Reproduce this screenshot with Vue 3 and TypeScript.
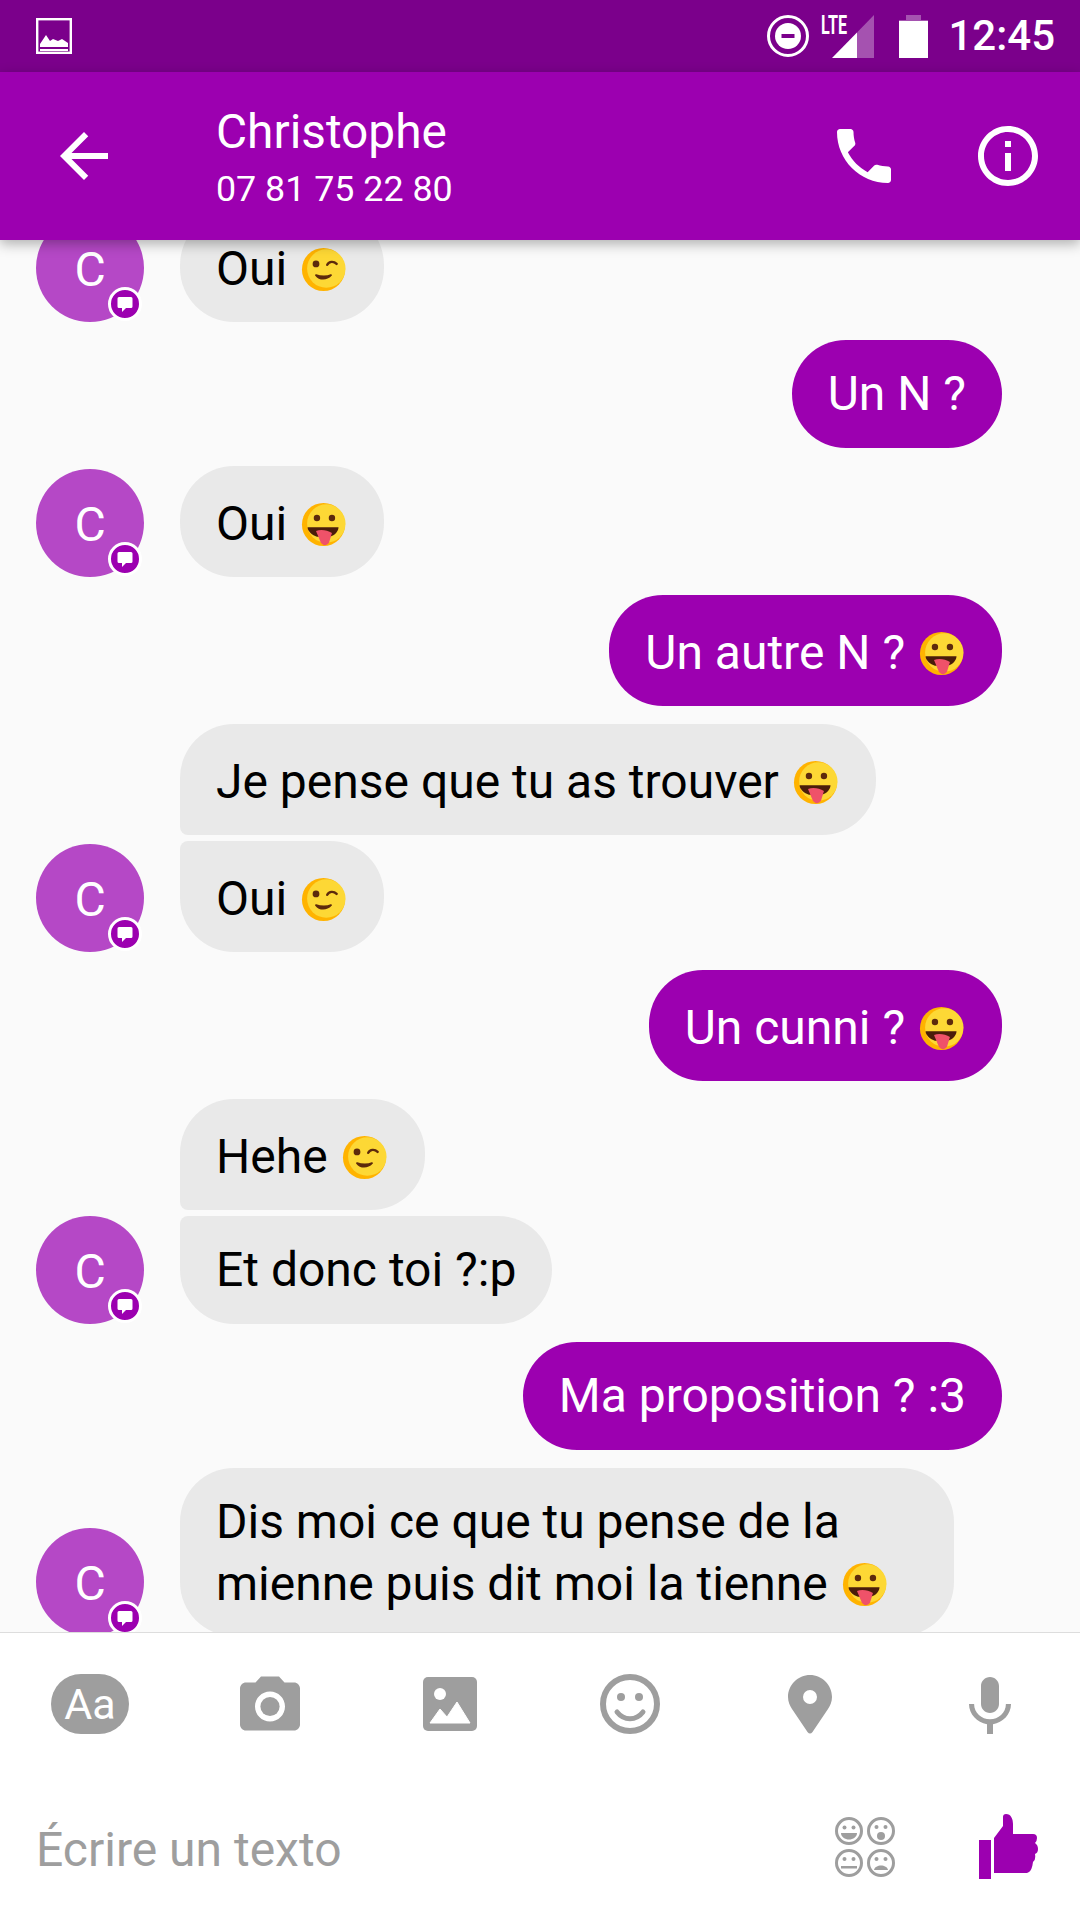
<script setup lang="ts">
type Line = { text: string; emoji?: 'wink' | 'tongue'; cls?: string }
type Group = { from: 'them' | 'me'; lines: Line[] }

const groups: Group[] = [
  { from: 'them', lines: [{ text: 'Oui', emoji: 'wink' }] },
  { from: 'me', lines: [{ text: 'Un N ?' }] },
  { from: 'them', lines: [{ text: 'Oui', emoji: 'tongue' }] },
  { from: 'me', lines: [{ text: 'Un autre N ?', emoji: 'tongue' }] },
  { from: 'them', lines: [{ text: 'Je pense que tu as trouver', emoji: 'tongue' }, { text: 'Oui', emoji: 'wink' }] },
  { from: 'me', lines: [{ text: 'Un cunni ?', emoji: 'tongue' }] },
  { from: 'them', lines: [{ text: 'Hehe', emoji: 'wink' }, { text: 'Et donc toi ?:p' }] },
  { from: 'me', lines: [{ text: 'Ma proposition ? :3' }] },
  { from: 'them', lines: [{ text: 'Dis moi ce que tu pense de la mienne puis dit moi la tienne', emoji: 'tongue', cls: 'multi' }] },
]

const bubbleClass = (g: Group, i: number) => ({
  tall: !!g.lines[i].emoji,
  'join-below': i < g.lines.length - 1,
  'join-above': i > 0,
})
</script>

<template>
  <div class="phone">
    <svg class="defs" width="0" height="0">
      <symbol id="tongue" viewBox="0 0 48 48">
        <circle cx="24" cy="24" r="23" fill="#ffb300" />
        <circle cx="27" cy="23" r="20.5" fill="#fdd835" />
        <circle cx="17" cy="17" r="3.4" fill="#5d2a0c" />
        <circle cx="33" cy="17" r="3.4" fill="#5d2a0c" />
        <path d="M7 27h33c0 4-4 9-9 10H17C12 36 7 31 7 27z" fill="#4a1d0a" />
        <path d="M16 31c5-2 12-1 17 2l-3 10c-2 4-7 4-9 0z" fill="#ef5269" />
      </symbol>
      <symbol id="wink" viewBox="0 0 48 48">
        <circle cx="24" cy="24" r="23" fill="#ffb300" />
        <circle cx="27" cy="23" r="20.5" fill="#fdd835" />
        <circle cx="16" cy="18" r="3.6" fill="#5d2a0c" />
        <path d="M28 19c2-4 7-4 10-1" fill="none" stroke="#5d2a0c" stroke-width="2.6" stroke-linecap="round" />
        <path d="M16 30c4 5 11 5 16 0-4 2-11 2-16 0z" fill="#5d2a0c" stroke="#5d2a0c" stroke-width="2" stroke-linejoin="round" />
      </symbol>
    </svg>

    <div class="statusbar">
      <svg class="st-image" width="36" height="36" viewBox="0 0 36 36">
        <rect x="1.2" y="1.2" width="33.6" height="33.6" fill="none" stroke="#fff" stroke-width="2.4" />
        <path d="M4 26l6-9 4 6 3-2 5 2 4-2 6 4v4H4z" fill="#fff" />
        <rect x="4" y="31" width="28" height="2" fill="#fff" />
      </svg>
      <div class="st-right">
        <svg width="42" height="42" viewBox="0 0 42 42">
          <circle cx="21" cy="21" r="19.5" fill="none" stroke="#fff" stroke-width="3" />
          <circle cx="21" cy="21" r="13" fill="#fff" />
          <rect x="14.5" y="19" width="13" height="4" fill="#7b008b" />
        </svg>
        <svg class="st-signal" width="53" height="43" viewBox="0 0 53 43">
          <text x="0" y="19" class="lte" textLength="26" lengthAdjust="spacingAndGlyphs">LTE</text>
          <path d="M11 43l25-25.600V43z" fill="#fff" />
          <path d="M36 17.400L53 0v43H36z" fill="#fff" fill-opacity=".32" />
        </svg>
        <svg class="st-batt" width="29" height="43" viewBox="0 0 29 43">
          <path d="M7 0h15v5h7v5H0V5h7z" fill="#fff" fill-opacity=".32" />
          <rect y="6" width="29" height="37" fill="#fff" />
        </svg>
        <span class="time">12:45</span>
      </div>
    </div>

    <header class="appbar">
      <svg class="back" width="72" height="72" viewBox="0 0 24 24" fill="#fff">
        <path d="M20 11H7.830l5.590-5.590L12 4l-8 8 8 8 1.410-1.410L7.830 13H20v-2z" />
      </svg>
      <div class="who">
        <div class="name">Christophe</div>
        <div class="num">07 81 75 22 80</div>
      </div>
      <svg class="call" width="72" height="72" viewBox="0 0 24 24" fill="#fff">
        <path d="M6.620 10.790c1.440 2.830 3.760 5.140 6.590 6.590l2.200-2.200c.27-.27.67-.36 1.020-.24 1.120.37 2.330.57 3.570.57.55 0 1 .45 1 1V20c0 .55-.45 1-1 1-9.390 0-17-7.610-17-17 0-.55.45-1 1-1h3.500c.55 0 1 .45 1 1 0 1.250.2 2.450.57 3.570.11.35.03.74-.25 1.020l-2.200 2.200z" />
      </svg>
      <svg width="72" height="72" viewBox="0 0 24 24" fill="#fff">
        <path d="M11 17h2v-6h-2v6zm1-15C6.480 2 2 6.480 2 12s4.480 10 10 10 10-4.480 10-10S17.520 2 12 2zm0 18c-4.410 0-8-3.590-8-8s3.590-8 8-8 8 3.590 8 8-3.590 8-8 8zM11 9h2V7h-2v2z" />
      </svg>
    </header>

    <main class="thread">
      <div class="scroll">
        <div v-for="(g, gi) in groups" :key="gi" class="group" :class="g.from">
          <div v-if="g.from === 'them'" class="avatar">
            C
            <span class="badge">
              <svg width="16" height="16" viewBox="0 0 16 16">
                <path d="M2 1h12a1.500 1.500 0 0 1 1.500 1.500v8A1.500 1.500 0 0 1 14 12H9l-4 4v-4H2a1.500 1.500 0 0 1-1.500-1.500v-8A1.500 1.500 0 0 1 2 1z" fill="#fff" />
              </svg>
            </span>
          </div>
          <div class="stack">
            <div v-for="(l, i) in g.lines" :key="i" class="bubble" :class="[bubbleClass(g, i), l.cls]">
              {{ l.text }}
              <svg v-if="l.emoji" class="emoji" viewBox="0 0 48 48"><use :href="'#' + l.emoji" /></svg>
            </div>
          </div>
        </div>
      </div>
    </main>

    <footer class="composer">
      <div class="tools">
        <div class="tool"><span class="aa">Aa</span></div>
        <div class="tool">
          <svg width="60" height="55" viewBox="2 2 20 18" fill="#9e9e9e">
            <path d="M9 2L7.170 4H4c-1.100 0-2 .9-2 2v12c0 1.100.9 2 2 2h16c1.100 0 2-.9 2-2V6c0-1.100-.9-2-2-2h-3.170L15 2H9zm3 15c-2.760 0-5-2.240-5-5s2.240-5 5-5 5 2.240 5 5-2.240 5-5 5z" />
            <circle cx="12" cy="12" r="3.200" />
          </svg>
        </div>
        <div class="tool">
          <svg width="54" height="54" viewBox="0 0 54 54">
            <rect width="54" height="54" rx="5" fill="#9e9e9e" />
            <circle cx="17" cy="17" r="6" fill="#fff" />
            <path d="M7 46l10-14 7 8 10-15 13 21z" fill="#fff" stroke="#fff" stroke-width="1" stroke-linejoin="round" />
          </svg>
        </div>
        <div class="tool">
          <svg width="60" height="60" viewBox="0 0 60 60" fill="#9e9e9e">
            <circle cx="30" cy="30" r="27" fill="none" stroke="#9e9e9e" stroke-width="6" />
            <circle cx="21" cy="23" r="4" />
            <circle cx="39" cy="23" r="4" />
            <path d="M17 38c7 9 19 9 26 0" fill="none" stroke="#9e9e9e" stroke-width="5" stroke-linecap="round" />
          </svg>
        </div>
        <div class="tool">
          <svg width="44" height="60" viewBox="0 0 44 60">
            <path fill-rule="evenodd" fill="#9e9e9e" d="M22 1C10 1 0 11 0 23c0 5 2 9 4 12l15.500 23q2.500 3 5 0L40 35c2-3 4-7 4-12C44 11 34 1 22 1zm0 15a7 7 0 1 1 0 14 7 7 0 0 1 0-14z" />
          </svg>
        </div>
        <div class="tool">
          <svg width="42" height="60" viewBox="5 1 14 20" fill="#9e9e9e">
            <path d="M12 14c1.660 0 3-1.340 3-3V5c0-1.660-1.340-3-3-3S9 3.340 9 5v6c0 1.660 1.340 3 3 3zm5.300-3c0 3-2.540 5.100-5.300 5.100S6.700 14 6.700 11H5c0 3.410 2.720 6.230 6 6.720V21h2v-3.280c3.280-.48 6-3.300 6-6.720h-1.700z" />
          </svg>
        </div>
      </div>
      <div class="input">
        <span class="placeholder">Écrire un texto</span>
        <svg class="faces" width="60" height="60" viewBox="0 0 60 60">
          <g fill="none" stroke="#9e9e9e" stroke-width="3">
            <circle cx="14" cy="14" r="12.500" />
            <circle cx="46" cy="14" r="12.500" />
            <circle cx="14" cy="46" r="12.500" />
            <circle cx="46" cy="46" r="12.500" />
          </g>
          <g fill="#9e9e9e">
            <circle cx="9.500" cy="10.500" r="2" /><circle cx="18.500" cy="10.500" r="2" />
            <path d="M6 16h16c0 4-4 6.500-8 6.500S6 20 6 16z" />
            <circle cx="41.500" cy="10" r="2" /><circle cx="50.500" cy="10" r="2" />
            <circle cx="46" cy="19" r="4" />
            <circle cx="9.500" cy="42" r="2" /><circle cx="18.500" cy="42" r="2" />
            <rect x="6" y="49" width="16" height="2.500" />
            <circle cx="41.500" cy="42" r="2" /><circle cx="50.500" cy="42" r="2" />
            <path d="M39 53c1-6 13-6 14 0z" />
          </g>
        </svg>
        <svg class="thumb" width="59" height="65" viewBox="0 0 59 65" fill="#9c00b0">
          <rect y="26" width="12" height="39" />
          <path d="M15 24l9-12V3q0-3 3-3c5 0 7 5 7 10v10h20q4 0 4 4 0 3-2 5 3 2 3 6 0 4-3 5 1 6-2 8-1 8-4 10l-2 1H15z" />
        </svg>
      </div>
    </footer>
  </div>
</template>

<style scoped>
.phone {
  width: 1080px;
  height: 1920px;
  display: flex;
  flex-direction: column;
  overflow: hidden;
  background: #fafafa;
  font-family: Roboto, "Noto Sans", sans-serif;
}

.defs {
  position: absolute;
}

.statusbar {
  height: 72px;
  flex: none;
  display: flex;
  align-items: center;
  justify-content: space-between;
  padding: 0 25px 0 36px;
  background: #7b008b;
  color: #fff;
}

.st-right {
  display: flex;
  align-items: center;
  gap: 12px;
}

.st-signal {
  overflow: visible;
}

.st-batt {
  margin-left: 13px;
}

.lte {
  font: 700 25px Roboto, sans-serif;
  fill: #fff;
}

.time {
  margin-left: 8px;
  font-size: 42px;
  font-weight: 500;
  line-height: 42px;
}

.appbar {
  height: 168px;
  flex: none;
  position: relative;
  z-index: 2;
  display: flex;
  align-items: center;
  padding: 0 36px 0 48px;
  background: #9c00b0;
  color: #fff;
  box-shadow: 0 4px 12px rgba(0, 0, 0, 0.3);
}

.who {
  margin-left: 96px;
  flex: 1;
  display: flex;
  flex-direction: column;
  gap: 8px;
  padding-top: 1px;
}

.name {
  font-size: 47.800px;
  line-height: 56px;
}

.num {
  font-size: 35.800px;
  line-height: 42px;
}

.call {
  margin-right: 72px;
}

.thread {
  flex: 1;
  min-height: 0;
  overflow: hidden;
}

.scroll {
  margin-top: -29px;
  display: flex;
  flex-direction: column;
  gap: 18px;
}

.group {
  display: flex;
  align-items: flex-end;
  padding: 0 36px;
}

.group.me {
  justify-content: flex-end;
  padding-right: 78px;
}

.avatar {
  position: relative;
  flex: none;
  width: 108px;
  height: 108px;
  margin-right: 36px;
  border-radius: 50%;
  background: #b548c6;
  color: #fff;
  font-size: 48px;
  line-height: 112px;
  text-align: center;
}

.badge {
  position: absolute;
  left: 72px;
  top: 73px;
  width: 28px;
  height: 28px;
  display: flex;
  align-items: center;
  justify-content: center;
  border: 3.500px solid #fff;
  border-radius: 50%;
  background: #9c00b0;
}

.stack {
  display: flex;
  flex-direction: column;
  align-items: flex-start;
  gap: 6px;
}

.bubble {
  max-width: 774px;
  box-sizing: border-box;
  padding: 23px 36px;
  border-radius: 54px;
  background: #e9e9e9;
  color: #000;
  font-size: 48px;
  line-height: 62px;
}

.bubble.tall {
  padding-top: 27px;
  padding-bottom: 22px;
}

.bubble.multi {
  padding-top: 23px;
  padding-bottom: 21px;
}

.me .bubble {
  background: #9c00b0;
  color: #fff;
}

.join-below {
  border-bottom-left-radius: 8px;
}

.join-above {
  border-top-left-radius: 8px;
}

.emoji {
  display: inline-block;
  width: 45px;
  height: 45px;
  margin-left: 2px;
  margin-right: 2px;
  vertical-align: -7px;
}

.composer {
  height: 288px;
  flex: none;
  background: #fff;
  border-top: 1px solid #ddd;
  box-sizing: border-box;
}

.tools {
  height: 141px;
  display: grid;
  grid-template-columns: repeat(6, 180px);
}

.tool {
  display: flex;
  align-items: center;
  justify-content: center;
}

.aa {
  width: 78px;
  height: 60px;
  border-radius: 30px;
  background: #9e9e9e;
  color: #fff;
  font-size: 43px;
  line-height: 60px;
  text-align: center;
}

.input {
  height: 145px;
  display: flex;
  align-items: center;
  padding: 0 42px 0 36px;
}

.placeholder {
  flex: 1;
  padding-top: 5px;
  color: #9e9e9e;
  font-size: 48px;
}

.thumb {
  margin-left: 84px;
}
</style>
